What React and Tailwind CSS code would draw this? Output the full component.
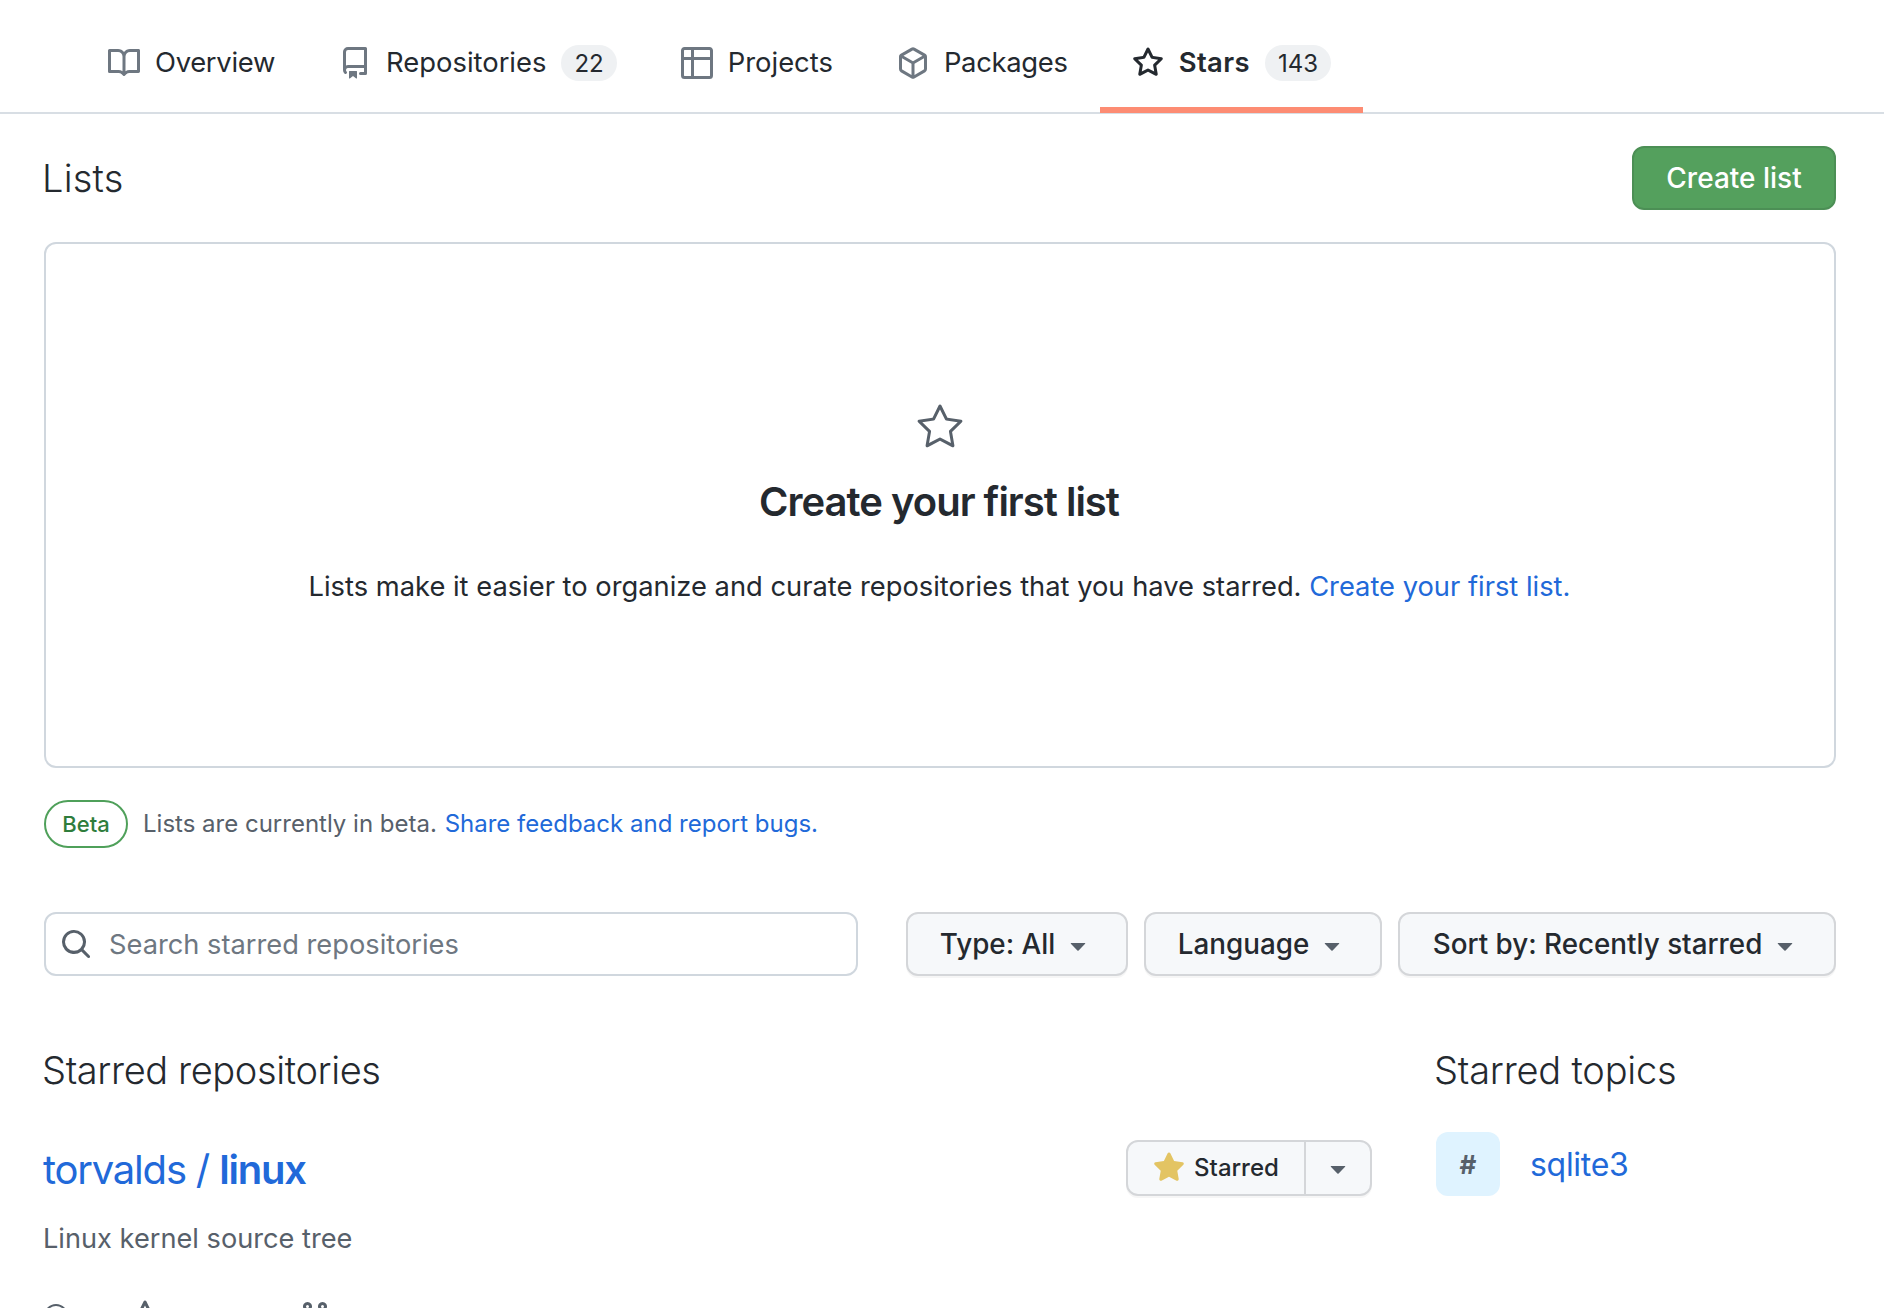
import React from 'react';

const paths = {
  book: 'M0 1.75A.75.75 0 0 1 .75 1h4.253c1.227 0 2.317.59 3 1.501A3.743 3.743 0 0 1 11.006 1h4.245a.75.75 0 0 1 .75.75v10.5a.75.75 0 0 1-.75.75h-4.507a2.25 2.25 0 0 0-1.591.659l-.622.621a.75.75 0 0 1-1.06 0l-.622-.621A2.25 2.25 0 0 0 5.258 13H.75a.75.75 0 0 1-.75-.75Zm7.251 10.324.004-5.073-.002-2.253A2.25 2.25 0 0 0 5.003 2.5H1.5v9h3.757a3.75 3.75 0 0 1 1.994.574ZM8.755 4.75l-.004 7.322a3.752 3.752 0 0 1 1.992-.572H14.5v-9h-3.495a2.25 2.25 0 0 0-2.25 2.25Z',
  repo: 'M2 2.5A2.5 2.5 0 0 1 4.5 0h8.75a.75.75 0 0 1 .75.75v12.5a.75.75 0 0 1-.75.75h-2.5a.75.75 0 0 1 0-1.5h1.75v-2h-8a1 1 0 0 0-.714 1.7.75.75 0 1 1-1.072 1.05A2.495 2.495 0 0 1 2 11.5Zm10.5-1h-8a1 1 0 0 0-1 1v6.708A2.486 2.486 0 0 1 4.5 9h8ZM5 12.25a.25.25 0 0 1 .25-.25h3.5a.25.25 0 0 1 .25.25v3.25a.25.25 0 0 1-.4.2l-1.45-1.087a.249.249 0 0 0-.3 0L5.4 15.7a.25.25 0 0 1-.4-.2Z',
  table: 'M0 1.75C0 .784.784 0 1.75 0h12.5C15.216 0 16 .784 16 1.75v12.5A1.75 1.75 0 0 1 14.25 16H1.75A1.75 1.75 0 0 1 0 14.25ZM6.5 6.5v8h7.75a.25.25 0 0 0 .25-.25V6.5Zm8-1.5V1.75a.25.25 0 0 0-.25-.25H6.5V5Zm-13 1.5v7.75c0 .138.112.25.25.25H5v-8ZM5 5V1.5H1.75a.25.25 0 0 0-.25.25V5Z',
  package: 'm8.878.392 5.25 3.045c.54.314.872.89.872 1.514v6.098a1.75 1.75 0 0 1-.872 1.514l-5.25 3.045a1.75 1.75 0 0 1-1.756 0l-5.25-3.045A1.75 1.75 0 0 1 1 11.049V4.951c0-.624.332-1.201.872-1.514L7.122.392a1.75 1.75 0 0 1 1.756 0ZM7.875 1.69l-4.63 2.685L8 7.133l4.755-2.758-4.63-2.685a.248.248 0 0 0-.25 0ZM2.5 5.677v5.372c0 .09.047.171.125.216l4.625 2.683V8.432Zm6.25 8.271 4.625-2.683a.25.25 0 0 0 .125-.216V5.677L8.75 8.432Z',
  star: 'M8 .25a.75.75 0 0 1 .673.418l1.882 3.815 4.21.612a.75.75 0 0 1 .416 1.279l-3.046 2.97.719 4.192a.751.751 0 0 1-1.088.791L8 12.347l-3.766 1.98a.75.75 0 0 1-1.088-.79l.72-4.194L.818 6.374a.75.75 0 0 1 .416-1.28l4.21-.611L7.327.668A.75.75 0 0 1 8 .25Zm0 2.445L6.615 5.5a.75.75 0 0 1-.564.41l-3.097.45 2.24 2.184a.75.75 0 0 1 .216.664l-.528 3.084 2.769-1.456a.75.75 0 0 1 .698 0l2.77 1.456-.53-3.084a.75.75 0 0 1 .216-.664l2.24-2.183-3.096-.45a.75.75 0 0 1-.564-.41L8 2.694Z',
  starFill: 'M8 .25a.75.75 0 0 1 .673.418l1.882 3.815 4.21.612a.75.75 0 0 1 .416 1.279l-3.046 2.97.719 4.192a.751.751 0 0 1-1.088.791L8 12.347l-3.766 1.98a.75.75 0 0 1-1.088-.79l.72-4.194L.818 6.374a.75.75 0 0 1 .416-1.28l4.21-.611L7.327.668A.75.75 0 0 1 8 .25Z',
  search: 'M10.68 11.74a6 6 0 0 1-7.922-8.982 6 6 0 0 1 8.982 7.922l3.04 3.04a.749.749 0 0 1-.326 1.275.749.749 0 0 1-.734-.215ZM11.5 7a4.499 4.499 0 1 0-8.997 0A4.499 4.499 0 0 0 11.5 7Z',
  fork: 'M5 5.372v.878c0 .414.336.75.75.75h4.5a.75.75 0 0 0 .75-.75v-.878a2.25 2.25 0 1 1 1.5 0v.878a2.25 2.25 0 0 1-2.25 2.25h-1.5v2.128a2.251 2.251 0 1 1-1.5 0V8.5h-1.5A2.25 2.25 0 0 1 3.5 6.25v-.878a2.25 2.25 0 1 1 1.5 0ZM5 3.25a.75.75 0 1 0-1.5 0 .75.75 0 0 0 1.5 0Zm6.75.75a.75.75 0 1 0 0-1.5.75.75 0 0 0 0 1.5Zm-3 8.75a.75.75 0 1 0-1.5 0 .75.75 0 0 0 1.5 0Z',
  caret: 'm4.427 7.427 3.396 3.396a.25.25 0 0 0 .354 0l3.396-3.396A.25.25 0 0 0 11.396 7H4.604a.25.25 0 0 0-.177.427Z',
};

const star24 =
  'M12 .25a.75.75 0 0 1 .673.418l3.058 6.197 6.839.994a.75.75 0 0 1 .415 1.279l-4.948 4.823 1.168 6.811a.751.751 0 0 1-1.088.791L12 18.347l-6.117 3.216a.75.75 0 0 1-1.088-.79l1.168-6.812-4.948-4.823a.75.75 0 0 1 .416-1.28l6.838-.993L11.328.668A.75.75 0 0 1 12 .25Zm0 2.445L9.44 7.882a.75.75 0 0 1-.565.41l-5.725.832 4.143 4.038a.75.75 0 0 1 .215.664l-.978 5.702 5.121-2.692a.75.75 0 0 1 .698 0l5.12 2.692-.977-5.702a.748.748 0 0 1 .215-.664l4.143-4.038-5.725-.831a.75.75 0 0 1-.565-.41L12 2.694Z';

const Octicon = ({ name, className }) => (
  <svg viewBox="0 0 16 16" fill="currentColor" className={className}>
    <path d={paths[name]} />
  </svg>
);

const tabs = [
  { label: 'Overview', icon: 'book', labelClass: 'tracking-[-0.3px]' },
  { label: 'Repositories', icon: 'repo', count: 22 },
  { label: 'Projects', icon: 'table' },
  { label: 'Packages', icon: 'package', labelClass: 'tracking-[-0.3px]' },
  { label: 'Stars', icon: 'star', count: 143, active: true, labelClass: 'font-semibold tracking-[0.4px]' },
];

const Tab = ({ label, icon, count, active, labelClass = '' }) => (
  <a
    className={
      'flex h-[113px] items-center px-[32px] border-b-[6px] pt-[19px] ' +
      (active ? 'border-[#fd8c73]' : 'border-transparent')
    }
  >
    <Octicon
      name={icon}
      className={'w-[32px] h-[32px] mr-[15px] ' + (active ? 'text-[#24292f]' : 'text-[#6e7781]')}
    />
    <span className={'text-[27.4px] text-[#24292f] ' + labelClass}>{label}</span>
    {count && (
      <span className="ml-[15px] flex h-[36px] items-center rounded-full bg-[#eff1f3] px-[13px] pt-px text-[24px] text-[#24292f]">
        {count}
      </span>
    )}
  </a>
);

const FilterButton = ({ label, className }) => (
  <button
    className={
      'flex h-[64px] items-center justify-center rounded-[12px] border-2 border-[#d4d6d9] bg-[#f6f8fa] pt-px text-[27.8px] font-medium text-[#24292f] shadow-[0_2px_0_rgba(27,31,36,0.04)] ' +
      className
    }
  >
    {label}
    <Octicon name="caret" className="ml-[7px] w-[32px] h-[32px] text-[#57606a]" />
  </button>
);

export default function App() {
  return (
    <div className="h-[1308px] overflow-hidden bg-white font-['Inter','Liberation_Sans',sans-serif] text-[#24292f]">
      <nav className="flex h-[114px] border-b-2 border-[#d8dee4] pl-[76px]">
        {tabs.map(tab => (
          <Tab key={tab.label} {...tab} />
        ))}
      </nav>

      <main className="pl-[44px] pr-[48px]">
        <div className="flex h-[128px] items-center justify-between">
          <h2 className="-ml-[2px] text-[38px] font-light tracking-[0.2px]">Lists</h2>
          <button className="h-[64px] w-[204px] rounded-[12px] border-2 border-[#4c8f55] bg-[#54a05d] text-[28px] font-medium text-white">
            Create list
          </button>
        </div>

        <section className="flex h-[526px] flex-col items-center rounded-[12px] border-2 border-[#d0d7de] pt-[160px]">
          <svg viewBox="0 0 24 24" fill="currentColor" className="w-[48px] h-[48px] text-[#57606a]">
            <path d={star24} />
          </svg>
          <h3 className="mt-[25px] -ml-[2px] text-[40px] leading-[50px] font-semibold tracking-[-1px]">Create your first list</h3>
          <p className="mt-[39px] -ml-px text-[27.3px] leading-[42px]">
            Lists make it easier to organize and curate repositories that you have starred.{' '}
            <a className="text-[#2169d9]">Create your first list.</a>
          </p>
        </section>

        <div className="mt-[32px] flex items-center">
          <span className="flex h-[48px] w-[84px] items-center justify-center rounded-full border-2 border-[#4fa05a] text-[22px] font-medium text-[#2f7d3c]">
            Beta
          </span>
          <span className="ml-[15px] text-[24px] text-[#57606a]">
            Lists are currently in beta. <a className="ml-px text-[#2169d9]">Share feedback and report bugs.</a>
          </span>
        </div>

        <div className="mt-[64px] flex items-center">
          <div className="flex h-[64px] w-[814px] items-center rounded-[12px] border-2 border-[#d0d7de] pl-[14px]">
            <Octicon name="search" className="w-[32px] h-[32px] text-[#57606a]" />
            <span className="ml-[17px] pt-[2px] text-[27.25px] text-[#6e7781]">Search starred repositories</span>
          </div>
          <div className="ml-[48px] flex gap-[16px]">
            <FilterButton label="Type: All" className="w-[222px]" />
            <FilterButton label="Language" className="w-[238px]" />
            <FilterButton label="Sort by: Recently starred" className="w-[438px]" />
          </div>
        </div>

        <div className="mt-[69px] flex">
          <div className="w-[1328px]">
            <h2 className="-ml-[2px] text-[38px] leading-[50px] font-light tracking-[-0.38px]">Starred repositories</h2>
            <div className="mt-[45px] flex items-start justify-between">
              <div>
                <a className="-ml-px block text-[40px] leading-[60px] tracking-[-1.2px] text-[#2169d9]">
                  torvalds / <span className="font-semibold">linux</span>
                </a>
                <p className="-ml-px mt-[19px] text-[27.2px] leading-[40px] text-[#57606a]">Linux kernel source tree</p>
                <div className="mt-[41px] flex items-center text-[#57606a]">
                  <span className="h-[24px] w-[24px] rounded-full border-2 border-[#57606a]" />
                  <Octicon name="star" className="ml-[61px] w-[32px] h-[32px]" />
                  <Octicon name="fork" className="ml-[138px] w-[32px] h-[32px]" />
                </div>
              </div>
              <div className="flex h-[56px] w-[246px] rounded-[12px] border-2 border-[#d4d6d9] bg-[#f6f8fa] shadow-[0_2px_0_rgba(27,31,36,0.04)]">
                <span className="flex w-[178px] items-center justify-center border-r-2 border-[#d4d6d9] text-[24px] font-medium">
                  <Octicon name="starFill" className="mr-[9px] w-[32px] h-[32px] text-[#e3c463]" />
                  Starred
                </span>
                <span className="flex flex-1 items-center justify-center">
                  <Octicon name="caret" className="w-[32px] h-[32px] text-[#57606a]" />
                </span>
              </div>
            </div>
          </div>
          <div className="ml-[64px]">
            <h2 className="-ml-[2px] text-[38px] leading-[50px] font-light tracking-[-0.2px]">Starred topics</h2>
            <div className="mt-[37px] flex items-center">
              <span className="flex h-[64px] w-[64px] items-center justify-center rounded-[12px] bg-[#dff3ff] text-[26px] font-bold text-[#57606a]">
                #
              </span>
              <a className="ml-[30px] mt-[2px] text-[32px] tracking-[-0.3px] text-[#2169d9]">sqlite3</a>
            </div>
          </div>
        </div>
      </main>
    </div>
  );
}
